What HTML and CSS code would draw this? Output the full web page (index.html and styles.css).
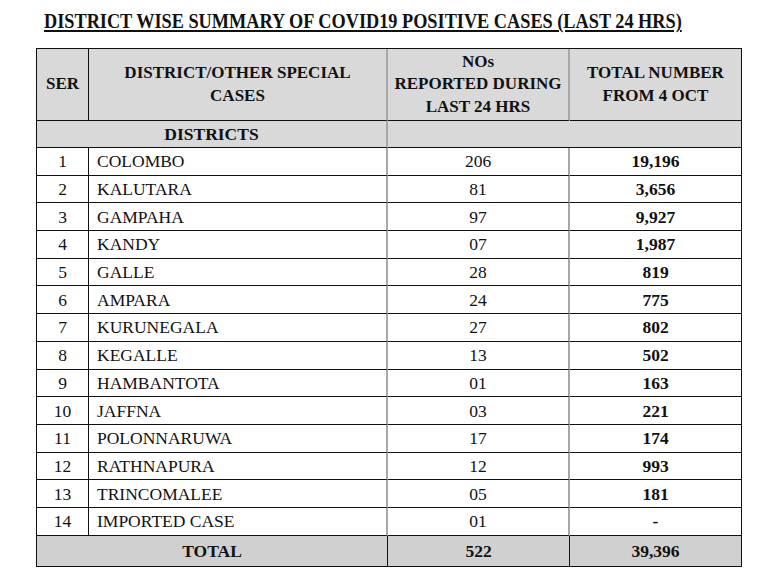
FILE: index.html
```html
<!DOCTYPE html>
<html>
<head>
<meta charset="utf-8">
<link rel="stylesheet" href="styles.css">
</head>
<body>
<div class="page">
  <h1 class="title"><span class="title-text">DISTRICT WISE SUMMARY OF COVID19 POSITIVE CASES (LAST 24 HRS)</span></h1>
  <table class="summary">
    <colgroup>
      <col class="c-ser">
      <col class="c-name">
      <col class="c-new">
      <col class="c-total">
    </colgroup>
    <thead>
      <tr class="head">
        <th class="ser">SER</th>
        <th class="name-h">DISTRICT/OTHER SPECIAL<br>CASES</th>
        <th class="new gray-r">NOs<br>REPORTED DURING<br>LAST 24 HRS</th>
        <th class="tot gray-l">TOTAL NUMBER<br>FROM 4 OCT</th>
      </tr>
    </thead>
    <tbody>
      <tr class="section">
        <th colspan="2" class="sec-label">DISTRICTS</th>
        <th colspan="2" class="sec-empty"></th>
      </tr>
      <tr><td class="ser">1</td><td class="name">COLOMBO</td><td class="new">206</td><td class="tot">19,196</td></tr>
      <tr><td class="ser">2</td><td class="name">KALUTARA</td><td class="new">81</td><td class="tot">3,656</td></tr>
      <tr><td class="ser">3</td><td class="name">GAMPAHA</td><td class="new">97</td><td class="tot">9,927</td></tr>
      <tr><td class="ser">4</td><td class="name">KANDY</td><td class="new">07</td><td class="tot">1,987</td></tr>
      <tr><td class="ser">5</td><td class="name">GALLE</td><td class="new">28</td><td class="tot">819</td></tr>
      <tr><td class="ser">6</td><td class="name">AMPARA</td><td class="new">24</td><td class="tot">775</td></tr>
      <tr><td class="ser">7</td><td class="name">KURUNEGALA</td><td class="new">27</td><td class="tot">802</td></tr>
      <tr><td class="ser">8</td><td class="name">KEGALLE</td><td class="new">13</td><td class="tot">502</td></tr>
      <tr><td class="ser">9</td><td class="name">HAMBANTOTA</td><td class="new">01</td><td class="tot">163</td></tr>
      <tr><td class="ser">10</td><td class="name">JAFFNA</td><td class="new">03</td><td class="tot">221</td></tr>
      <tr><td class="ser">11</td><td class="name">POLONNARUWA</td><td class="new">17</td><td class="tot">174</td></tr>
      <tr><td class="ser">12</td><td class="name">RATHNAPURA</td><td class="new">12</td><td class="tot">993</td></tr>
      <tr><td class="ser">13</td><td class="name">TRINCOMALEE</td><td class="new">05</td><td class="tot">181</td></tr>
      <tr><td class="ser">14</td><td class="name">IMPORTED CASE</td><td class="new">01</td><td class="tot">-</td></tr>
      <tr class="total">
        <th colspan="2" class="total-label">TOTAL</th>
        <th class="new">522</th>
        <th class="tot">39,396</th>
      </tr>
    </tbody>
  </table>
</div>
</body>
</html>
```

FILE: styles.css
```css
html, body {
  margin: 0;
  padding: 0;
  background: #ffffff;
}

body {
  font-family: "Liberation Serif", "Times New Roman", serif;
  color: #111111;
}

.page {
  width: 775px;
  height: 576px;
  overflow: hidden;
}

.title {
  margin: 0;
  padding: 10px 0 0 44px;
  height: 48px;
  box-sizing: border-box;
  font-size: 20px;
  line-height: 22px;
  font-weight: bold;
  white-space: nowrap;
}

.title-text {
  display: inline-block;
  transform: scaleX(0.913);
  transform-origin: left center;
  text-decoration: underline;
  text-decoration-thickness: 2px;
  text-underline-offset: 2px;
}

.summary {
  margin-left: 36px;
  border-collapse: separate;
  border-spacing: 0;
  table-layout: fixed;
  width: 705px;
  border-top: 1px solid #111;
  border-left: 1px solid #111;
  font-size: 17.5px;
}

.c-ser { width: 52px; }
.c-name { width: 299px; }
.c-new { width: 182px; }
.c-total { width: 172px; }

.summary th,
.summary td {
  padding: 0;
  border-right: 1px solid #111;
  border-bottom: 1px solid #111;
  text-align: center;
  vertical-align: middle;
  box-sizing: border-box;
}

.summary td {
  height: 27.7px;
  line-height: 20px;
  font-weight: normal;
}

.summary td.name {
  text-align: left;
  padding-left: 8px;
  border-right: 2px solid #a8a8a8;
}

.summary td.new {
  border-right: 2px solid #a8a8a8;
}

.summary td.tot {
  font-weight: bold;
}

.head th {
  height: 72px;
  background: #d9d9d9;
  font-size: 17px;
  line-height: 22.5px;
  font-weight: bold;
}

.head th.name-h,
.head th.new {
  border-right: 2px solid #a8a8a8;
}

.section th {
  height: 27px;
  background: #d9d9d9;
  font-size: 17.5px;
  font-weight: bold;
  line-height: 20px;
}

.section th.sec-label {
  border-right: 2px solid #a8a8a8;
}

.total th {
  height: 31px;
  background: #d0d0d0;
  font-size: 17.5px;
  font-weight: bold;
  line-height: 20px;
}
```
